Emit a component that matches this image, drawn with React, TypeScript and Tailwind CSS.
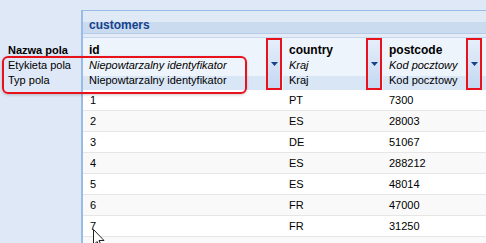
import React from "react";

const rows = [
  { id: 1, country: "PT", postcode: "7300" },
  { id: 2, country: "ES", postcode: "28003" },
  { id: 3, country: "DE", postcode: "51067" },
  { id: 4, country: "ES", postcode: "288212" },
  { id: 5, country: "ES", postcode: "48014" },
  { id: 6, country: "FR", postcode: "47000" },
  { id: 7, country: "FR", postcode: "31250" },
];

// column dropdown trigger, outlined in red in the screenshot
function Trigger() {
  return (
    <div className="w-[16px] shrink-0 border-2 border-[#e8121c] bg-gradient-to-b from-[#e6eefa] to-[#c3d8f2] flex items-center justify-center">
      <svg width="7" height="4" viewBox="0 0 7 4">
        <path d="M0 0H7L3.5 4Z" fill="#15428b" />
      </svg>
    </div>
  );
}

function HeaderCell({ name, label, type, w }: { name: string; label: string; type: string; w: string }) {
  return (
    <div className={`flex flex-col pl-[6px] pt-[5px] ${w} shrink-0`}>
      <div className="h-[15px] leading-[15px] font-bold text-[12px]">{name}</div>
      <div className="h-[15px] leading-[15px] italic">{label}</div>
      <div className="h-[15px] leading-[15px]">{type}</div>
    </div>
  );
}

export default function App() {
  return (
    <div
      className="relative w-[486px] h-[243px] overflow-hidden bg-[#dfe8f6] flex text-[11px] text-black"
      style={{ fontFamily: '"Liberation Sans", Arial, sans-serif' }}
    >
      {/* field property labels */}
      <div className="w-[81px] shrink-0 flex flex-col pt-[43px] pl-[8px]">
        <div className="h-[15px] leading-[15px] font-bold">Nazwa pola</div>
        <div className="h-[15px] leading-[15px]">Etykieta pola</div>
        <div className="h-[15px] leading-[15px]">Typ pola</div>
      </div>

      {/* table panel */}
      <div className="flex-1 mt-[10px] border-l-2 border-t border-[#99bbe8] flex flex-col">
        <div className="h-[23px] shrink-0 bg-gradient-to-b from-[#e0eaf7] from-50% to-[#cadbf0] to-50% border-b border-[#b5cbe8] pl-[6px] pt-[5px] flex items-center font-bold text-[12px] text-[#15428b]">
          customers
        </div>
        <div className="h-[3px] shrink-0 bg-[#e4ecf8]" />

        {/* header */}
        <div className="h-[53px] shrink-0 flex border-t border-[#c5d6ee] bg-gradient-to-b from-[#eef4fc] from-[74%] to-[#d9e6f6] to-[74%]">
          <HeaderCell w="w-[183px]" name="id" label="Niepowtarzalny identyfikator" type="Niepowtarzalny identyfikator" />
          <Trigger />
          <div className="w-px bg-[#f4f8fd]" />
          <HeaderCell w="w-[83px]" name="country" label="Kraj" type="Kraj" />
          <Trigger />
          <div className="w-px bg-[#f4f8fd]" />
          <HeaderCell w="w-[83px]" name="postcode" label="Kod pocztowy" type="Kod pocztowy" />
          <Trigger />
          <div className="flex-1" />
        </div>

        {/* data rows */}
        <div className="flex-1 flex flex-col bg-white">
          {rows.map((r, i) => (
            <div
              key={r.id}
              className={`h-[21px] shrink-0 flex items-center border-b border-[#e6e6e6] ${i % 2 ? "bg-[#f9f9f9]" : "bg-white"}`}
            >
              <div className="w-[200px] shrink-0 pl-[7px]">{r.id}</div>
              <div className="w-[100px] shrink-0 pl-[6px]">{r.country}</div>
              <div className="flex-1 pl-[6px]">{r.postcode}</div>
            </div>
          ))}
          <div className="h-[21px] shrink-0 bg-[#f9f9f9]" />
        </div>
      </div>

      {/* red annotation around label rows */}
      <div className="absolute left-[2px] top-[56px] w-[245px] h-[38px] border-2 border-[#e8121c] rounded-[6px] shadow-[0_1px_3px_rgba(0,0,0,0.2)]" />

      {/* mouse pointer */}
      <svg className="absolute left-[93px] top-[229px]" width="12" height="19" viewBox="0 0 12 19">
        <path d="M0.5 0.5V16L4 12.5L6.5 18L8.5 17L6 11.5H11Z" fill="white" stroke="#222" strokeWidth="1" />
      </svg>
    </div>
  );
}
